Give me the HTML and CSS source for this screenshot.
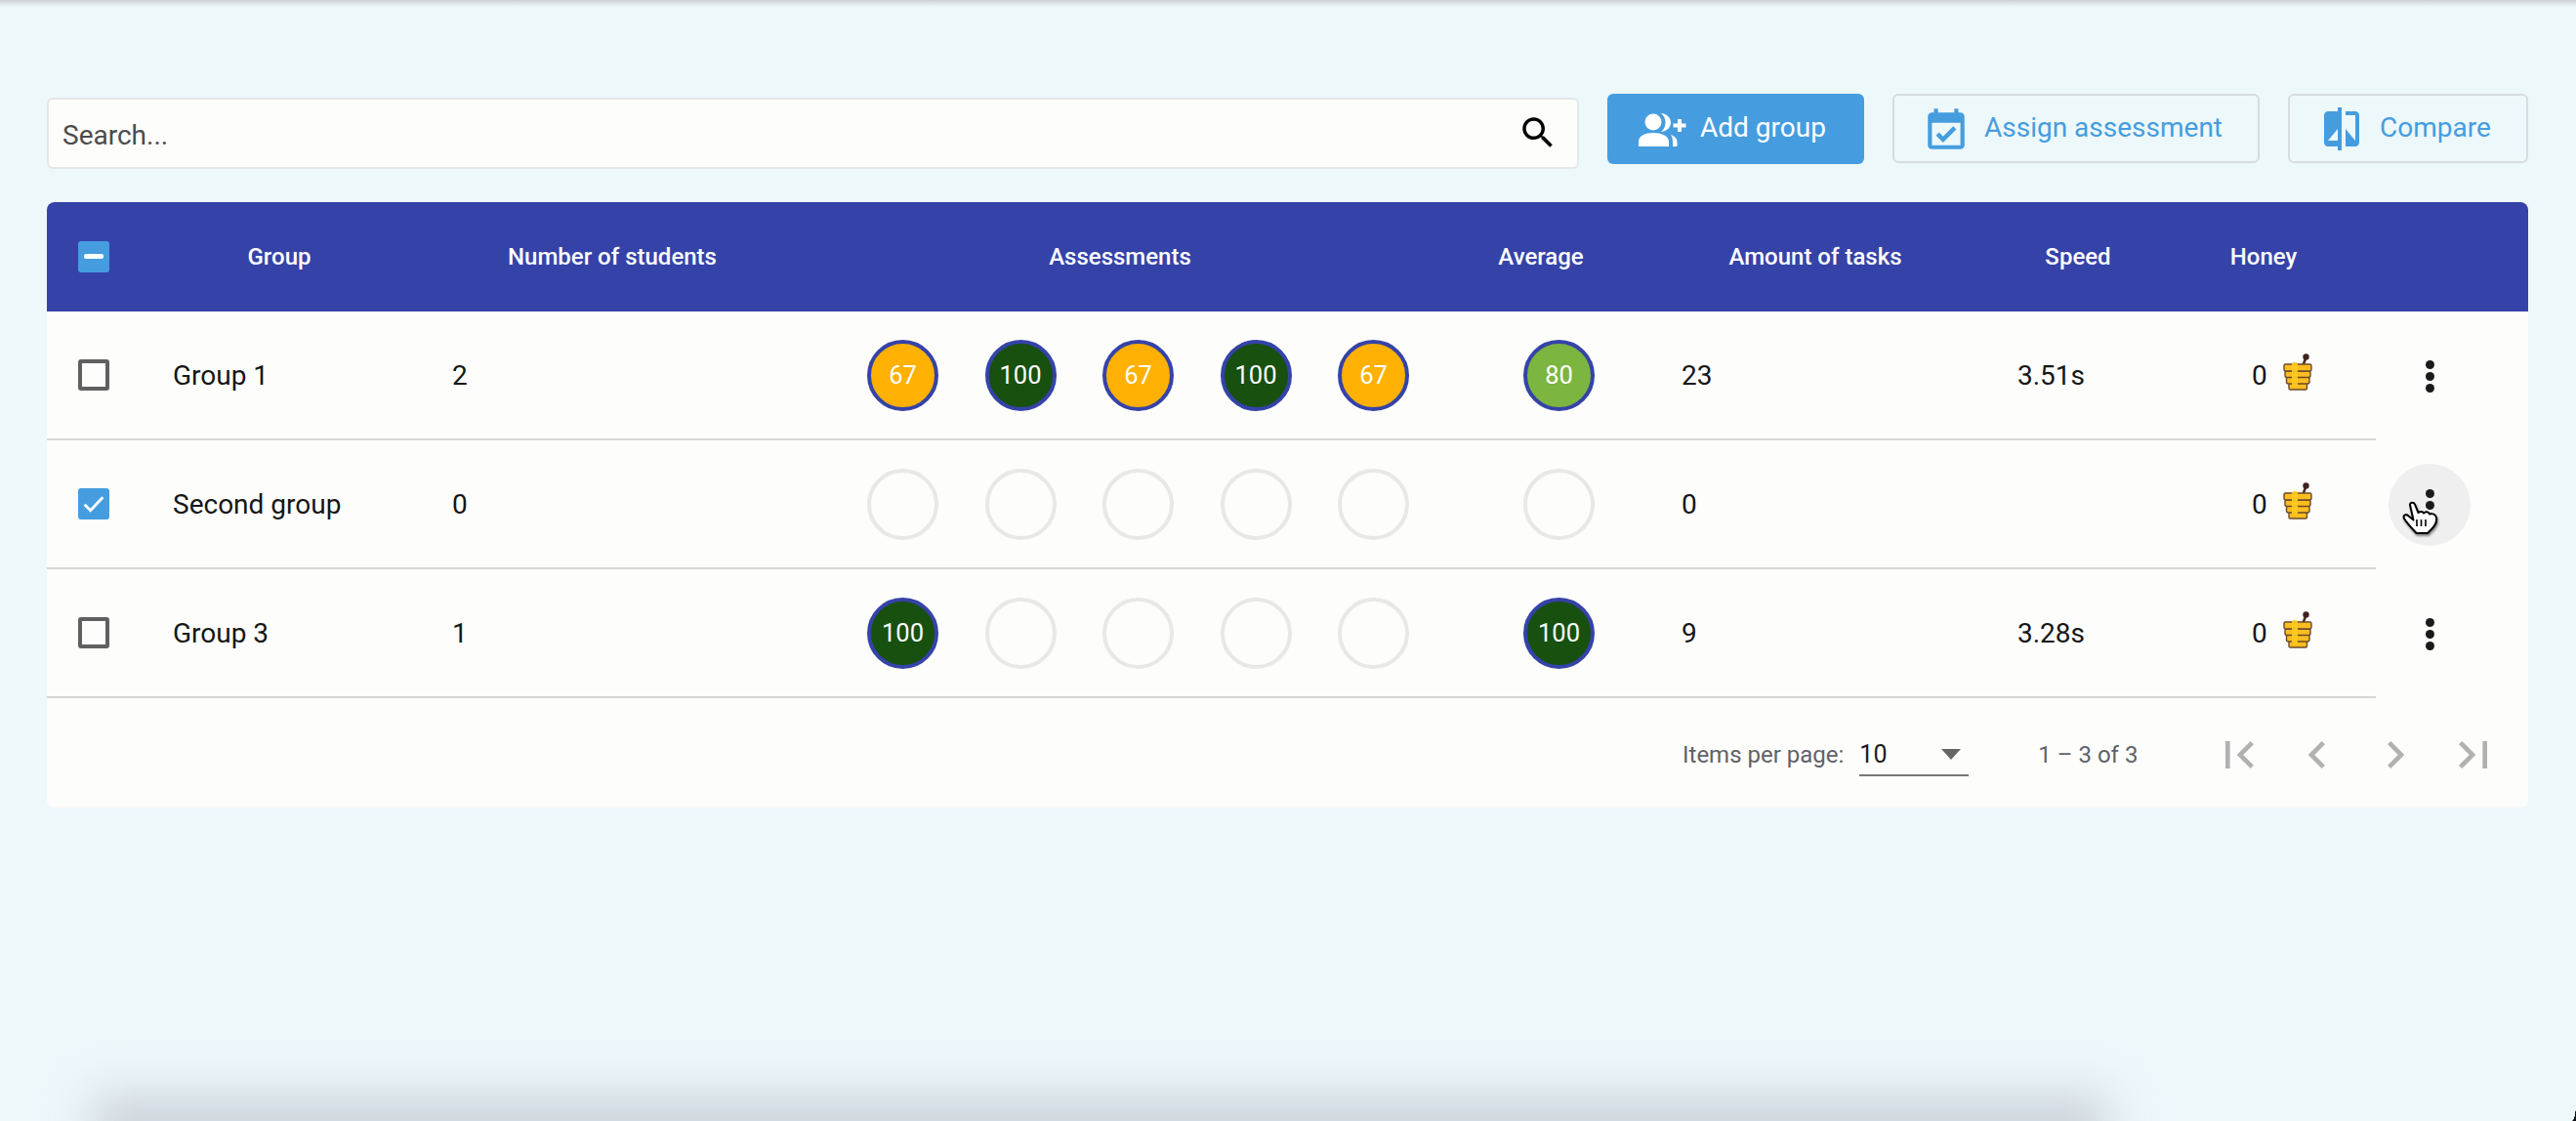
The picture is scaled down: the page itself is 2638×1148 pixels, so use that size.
FILE: index.html
```html
<!DOCTYPE html>
<html lang="en">
<head>
  <meta charset="UTF-8" />
  <title>Groups</title>
  <link rel="stylesheet" href="styles.css">
</head>
<body>
  <div class="top-shade"></div>

  <div class="toolbar">
    <div class="search">
      <span class="search-label">Search...</span>
      <svg class="search-icon" viewBox="0 0 24 24"><path d="M15.5 14h-.79l-.28-.27C15.41 12.59 16 11.11 16 9.5 16 5.91 13.09 3 9.5 3S3 5.91 3 9.5 5.91 16 9.5 16c1.61 0 3.09-.59 4.23-1.57l.27.28v.79l5 4.99L20.49 19l-4.99-5zm-6 0C7.01 14 5 11.99 5 9.5S7.01 5 9.5 5 14 7.01 14 9.5 11.99 14 9.5 14z"/></svg>
    </div>
    <button class="btn btn-primary btn-add">
      <svg class="btn-icon-wide" viewBox="0 0 50 40"><circle cx="15" cy="13" r="8.500"/><path d="M0 38v-5c0-6 7-9 15-9s16 3 16 9v5z"/><path d="M23 4c6 .5 10 4.500 10 9.500S29 22.500 23 23c3-2.500 4.500-5.500 4.500-9.500S26 6.500 23 4z"/><path d="M33 26c4 1.500 6.500 4 6.500 7v5H35v-5c0-2.500-.5-5-2-7z"/><path d="M40 10h4v4.500h4.500v4H44V23h-4v-4.500h-4.500v-4H40z"/></svg>
      <span>Add group</span>
    </button>
    <button class="btn btn-outline btn-assign">
      <svg class="btn-icon-cal" viewBox="0 0 24 24"><path d="M19 4h-1V2h-2v2H8V2H6v2H5C3.900 4 3 4.900 3 6v14c0 1.100.9 2 2 2h14c1.100 0 2-.9 2-2V6c0-1.100-.9-2-2-2zm0 16H5V9h14v11z"/><path d="M10.500 18.700l-3.500-3.500 1.500-1.500 2 2 5-5 1.500 1.500z"/></svg>
      <span>Assign assessment</span>
    </button>
    <button class="btn btn-outline btn-compare">
      <svg class="btn-icon" viewBox="0 0 24 24"><path d="M10 3H5c-1.100 0-2 .9-2 2v14c0 1.100.9 2 2 2h5v2h2V1h-2v2zm0 15H5l5-6v6zm9-15h-5v2h5v13l-5-6v9h5c1.100 0 2-.9 2-2V5c0-1.100-.9-2-2-2z"/></svg>
      <span>Compare</span>
    </button>
  </div>

  <div class="card">
    <div class="head">
      <div class="head-cell"><span class="check check-mixed"></span></div>
      <div class="head-cell">Group</div>
      <div class="head-cell">Number of students</div>
      <div class="head-cell">Assessments</div>
      <div class="head-cell">Average</div>
      <div class="head-cell">Amount of tasks</div>
      <div class="head-cell">Speed</div>
      <div class="head-cell">Honey</div>
      <div class="head-cell"></div>
    </div>

    <div class="row">
      <div class="cell cell-check"><span class="check"></span></div>
      <div class="cell">Group 1</div>
      <div class="cell">2</div>
      <div class="cell circles">
        <span class="score score-mid">67</span>
        <span class="score score-top">100</span>
        <span class="score score-mid">67</span>
        <span class="score score-top">100</span>
        <span class="score score-mid">67</span>
      </div>
      <div class="cell"><span class="score score-good">80</span></div>
      <div class="cell">23</div>
      <div class="cell">3.51s</div>
      <div class="cell honey">0
        <svg class="honey-icon" viewBox="0 0 30 38"><use href="#pot"/></svg>
      </div>
      <div class="cell-menu"><span class="dots"><i></i><i></i><i></i></span></div>
    </div>

    <div class="row">
      <div class="cell cell-check"><span class="check check-on"><svg viewBox="0 0 24 24"><path d="M5 12.500l4.500 4.500L19 7" fill="none" stroke="#fff" stroke-width="2.200"/></svg></span></div>
      <div class="cell">Second group</div>
      <div class="cell">0</div>
      <div class="cell circles">
        <span class="score"></span>
        <span class="score"></span>
        <span class="score"></span>
        <span class="score"></span>
        <span class="score"></span>
      </div>
      <div class="cell"><span class="score"></span></div>
      <div class="cell">0</div>
      <div class="cell"></div>
      <div class="cell honey">0
        <svg class="honey-icon" viewBox="0 0 30 38"><use href="#pot"/></svg>
      </div>
      <div class="cell-menu">
        <span class="dots dots-hover"><i></i><i></i><i></i>
          <svg class="hand" viewBox="0 0 37 34">
            <path d="M8 4C8 1 12 1 13 3.500L16.500 12C18 10.500 21 10.500 22 12.500 24 10.500 27 11 28 13.500 31 12.500 34 14 35 17 36 22 33 26 30 29L26 33H14.500C10 28 5 23 2 18 .5 15 3.500 13 6 15L11.500 19.500z" fill="#fff" stroke="#000" stroke-width="2" stroke-linejoin="round"/>
            <path d="M15 19v7M19.500 19v7M24 19v7" stroke="#000" stroke-width="1.600"/>
          </svg>
        </span>
      </div>
    </div>

    <div class="row">
      <div class="cell cell-check"><span class="check"></span></div>
      <div class="cell">Group 3</div>
      <div class="cell">1</div>
      <div class="cell circles">
        <span class="score score-top">100</span>
        <span class="score"></span>
        <span class="score"></span>
        <span class="score"></span>
        <span class="score"></span>
      </div>
      <div class="cell"><span class="score score-top">100</span></div>
      <div class="cell">9</div>
      <div class="cell">3.28s</div>
      <div class="cell honey">0
        <svg class="honey-icon" viewBox="0 0 30 38"><use href="#pot"/></svg>
      </div>
      <div class="cell-menu"><span class="dots"><i></i><i></i><i></i></span></div>
    </div>

    <div class="pager">
      <span class="pager-label">Items per page:</span>
      <div class="page-size">
        <span>10</span>
        <i class="arrow-down"></i>
      </div>
      <span class="pager-range">1 – 3 of 3</span>
      <div class="pager-nav">
        <svg viewBox="0 0 24 24"><path d="M18.410 16.590L13.820 12l4.590-4.590L17 6l-6 6 6 6zM6 6h2v12H6z"/></svg>
        <svg viewBox="0 0 24 24"><path d="M15.410 7.410L14 6l-6 6 6 6 1.410-1.410L10.830 12z"/></svg>
        <svg viewBox="0 0 24 24"><path d="M10 6L8.590 7.410 13.170 12l-4.580 4.590L10 18l6-6z"/></svg>
        <svg viewBox="0 0 24 24"><path d="M5.590 7.410L10.180 12l-4.590 4.590L7 18l6-6-6-6zM16 6h2v12h-2z"/></svg>
      </div>
    </div>
  </div>

  <div class="bottom-shade"></div>
  <div class="corner"></div>

  <svg class="defs" width="0" height="0">
    <symbol id="pot" viewBox="0 0 30 38">
      <path d="M20.500 12L23.500 4" stroke="#4a2c22" stroke-width="2.500" fill="none"/>
      <circle cx="23.500" cy="3.500" r="3.200" fill="#3d2420"/>
      <rect x="6" y="30" width="18.500" height="7" rx="1.500" fill="#fdbd20" stroke="#6a4a2c" stroke-width="1.400"/>
      <rect x="3.500" y="24" width="23.500" height="7" rx="2" fill="#fdbd20" stroke="#6a4a2c" stroke-width="1.400"/>
      <rect x="2" y="18" width="26" height="6.500" rx="2" fill="#fdbd20" stroke="#6a4a2c" stroke-width="1.400"/>
      <rect x="1" y="11" width="28" height="7" rx="1.500" fill="#fdbd20" stroke="#6a4a2c" stroke-width="1.400"/>
      <path d="M9 11c0-3 6-3 6 0v21c0 2-6 2-6 0z" fill="#ffcb1f" opacity=".9"/>
    </symbol>
  </svg>
</body>
</html>
```

FILE: styles.css
```css
body {
  margin: 0;
  height: 1148px;
  overflow: hidden;
  position: relative;
  background: #edf8fb;
  font-family: Roboto, sans-serif;
  color: #161616;
}

.top-shade {
  position: absolute;
  top: 0;
  left: 0;
  right: 0;
  height: 7px;
  background: linear-gradient(#ced2d4, #edf8fb);
}

.bottom-shade {
  position: absolute;
  left: 95px;
  right: 480px;
  bottom: -36px;
  height: 62px;
  background: #cbd2da;
  filter: blur(24px);
}

.corner {
  position: absolute;
  right: 0;
  bottom: 0;
  width: 4px;
  height: 18px;
  background: radial-gradient(ellipse 4px 18px at 0 0, transparent 96%, #111 100%);
}

.defs {
  position: absolute;
}

.toolbar {
  display: flex;
  align-items: center;
  padding: 96px 49px 0 48px;
  height: 71px;
}

.search {
  width: 1569px;
  height: 73px;
  box-sizing: border-box;
  margin-right: 29px;
  margin-top: 9px;
  padding: 0 19px 0 14px;
  display: flex;
  align-items: center;
  justify-content: space-between;
  background: #fdfdfb;
  border: 2px solid #e4e7e7;
  border-radius: 6px;
}

.search-label {
  font-size: 28px;
  color: #4c4c4c;
  padding-top: 5px;
}

.search-icon {
  width: 42px;
  height: 42px;
  fill: #000;
}

.btn {
  height: 71px;
  box-sizing: border-box;
  display: flex;
  align-items: center;
  font-family: Roboto, sans-serif;
  font-size: 28px;
  font-weight: 400;
  border-radius: 6px;
  padding: 0;
  cursor: pointer;
}

.btn span {
  padding-bottom: 2px;
}

.btn-primary {
  background: #459ddf;
  color: #fff;
  border: none;
  fill: #fff;
  height: 72px;
}

.btn-outline {
  background: transparent;
  color: #459ddf;
  border: 2px solid #d6dcdf;
  fill: #459ddf;
}

.btn-add {
  width: 263px;
  margin-right: 29px;
  padding-left: 32px;
  gap: 13px;
}

.btn-assign {
  width: 376px;
  margin-right: 29px;
  padding-left: 28px;
  gap: 14px;
}

.btn-compare {
  width: 246px;
  padding-left: 29px;
  gap: 15px;
}

.btn-icon {
  width: 48px;
  height: 48px;
}

.btn-icon-cal {
  width: 50px;
  height: 50px;
}

.btn-icon-wide {
  width: 50px;
  height: 40px;
}

.card {
  margin: 40px 49px 0 48px;
  background: #fdfdfb;
  border-radius: 8px;
  overflow: hidden;
}

.head {
  display: grid;
  grid-template-columns: 129px 218px 464px 576px 286px 276px 262px 118px 212px;
  height: 112px;
  background: #3543a8;
  color: #fff;
  font-size: 24px;
  font-weight: 500;
}

.head-cell {
  display: flex;
  align-items: center;
  justify-content: center;
}

.head-cell:first-child {
  justify-content: flex-start;
  padding-left: 32px;
}

.row {
  display: grid;
  grid-template-columns: 129px 286px 425px 672px 162px 344px 240px 127px 156px;
  height: 132px;
}

.cell {
  display: flex;
  align-items: center;
  font-size: 28px;
  border-bottom: 2px solid #d6d6d6;
  box-sizing: border-box;
}

.cell-check {
  padding-left: 32px;
}

.cell-menu {
  display: flex;
  align-items: center;
  padding-left: 13px;
}

.check {
  width: 32px;
  height: 32px;
  box-sizing: border-box;
  display: block;
  border: 4px solid #606060;
  border-radius: 3px;
}

.check-on {
  background: #459ddf;
  border: none;
}

.check-on svg {
  display: block;
  width: 32px;
  height: 32px;
}

.check-mixed {
  position: relative;
  background: #459ddf;
  border: none;
}

.check-mixed::after {
  content: "";
  position: absolute;
  left: 6px;
  right: 6px;
  top: 13px;
  height: 5px;
  border-radius: 2px;
  background: #fff;
}

.circles {
  gap: 47.500px;
}

.score {
  width: 73px;
  height: 73px;
  box-sizing: border-box;
  flex: none;
  display: flex;
  align-items: center;
  justify-content: center;
  border: 4px solid #e8e8e8;
  border-radius: 50%;
  font-size: 25.500px;
  color: #fff;
}

.score-mid {
  background: #feb103;
  border-color: #3543a8;
}

.score-top {
  background: #17500f;
  border-color: #3543a8;
}

.score-good {
  background: #7cb53f;
  border-color: #3543a8;
}

.honey {
  gap: 16px;
}

.honey-icon {
  width: 30px;
  height: 38px;
  margin-top: -6px;
}

.dots {
  position: relative;
  width: 84px;
  height: 84px;
  border-radius: 50%;
  display: flex;
  flex-direction: column;
  align-items: center;
  justify-content: center;
  gap: 3px;
}

.dots i {
  width: 9px;
  height: 9px;
  border-radius: 50%;
  background: #1a1a1a;
}

.dots-hover {
  background: #efefef;
}

.hand {
  position: absolute;
  left: 14px;
  top: 38px;
  width: 37px;
  height: 34px;
  filter: drop-shadow(1px 2px 1px rgba(0, 0, 0, 0.45));
}

.pager {
  display: flex;
  align-items: center;
  height: 112px;
  box-sizing: border-box;
  padding: 4px 0 0 1675px;
  font-size: 24px;
  color: #5f6368;
}

.page-size {
  width: 112px;
  height: 44px;
  margin-left: 16px;
  box-sizing: border-box;
  display: flex;
  align-items: center;
  justify-content: space-between;
  padding-right: 8px;
  border-bottom: 2px solid #777;
  font-size: 25px;
  color: #1c1c1c;
}

.arrow-down {
  border-left: 10.500px solid transparent;
  border-right: 10.500px solid transparent;
  border-top: 11px solid #666;
}

.pager-range {
  margin-left: 71px;
}

.pager-nav {
  display: flex;
  gap: 24px;
  margin-left: 76px;
}

.pager-nav svg {
  width: 56px;
  height: 56px;
  fill: #b1b1b1;
}
```
